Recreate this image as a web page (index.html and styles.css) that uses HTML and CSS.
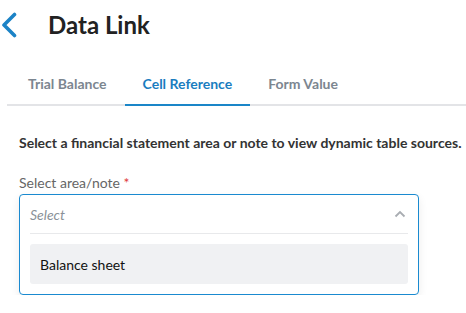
FILE: index.html
```html
<!DOCTYPE html>
<html lang="en">
<head>
    <meta charset="UTF-8">
    <meta name="viewport" content="width=device-width, initial-scale=1.0">
    <title>Data Link</title>
    <link rel="stylesheet" href="styles.css">
</head>
<body>

    <div class="header">
        <!-- Back arrow -->
        <svg class="back-icon" width="16" height="26" viewBox="0 0 16 26">
            <path d="M13.5 2.5 L3 13 L13.5 23.5" fill="none" stroke="#1c83c6" stroke-width="3.6" stroke-linecap="round" stroke-linejoin="round"/>
        </svg>
        <div class="title">Data Link</div>
    </div>

    <div class="tabs">
        <div class="tab">Trial Balance</div>
        <div class="tab active">Cell Reference</div>
        <div class="tab">Form Value</div>
    </div>

    <div class="content">
        <div class="intro">Select a financial statement area or note to view dynamic table sources.</div>

        <div class="field-label">Select area/note <span class="required">*</span></div>

        <div class="select-box">
            <div class="select-head">
                <span class="placeholder">Select</span>
                <svg width="12" height="8" viewBox="0 0 12 8">
                    <path d="M1.5 6.5 L6 2 L10.5 6.5" fill="none" stroke="#a9adb2" stroke-width="1.8"/>
                </svg>
            </div>
            <div class="option">Balance sheet</div>
        </div>
    </div>

</body>
</html>
```

FILE: styles.css
```css
* {
    margin: 0;
    padding: 0;
    box-sizing: border-box;
    font-family: Lato, "Liberation Sans", sans-serif;
}

body {
    background: #fff;
    color: #222;
}

.header {
    display: flex;
    align-items: center;
    height: 50px;
    padding-left: 1px;
}

.title {
    font-size: 24px;
    font-weight: bold;
    color: #222;
    margin-left: 31px;
    margin-top: -1px;
}

.tabs {
    display: flex;
    margin-left: 7px;
    margin-top: 15px;
    border-bottom: 2px solid #e3e4e7;
    padding-left: 4px;
}

.tab {
    font-size: 14px;
    font-weight: bold;
    color: #7c8690;
    padding: 10px 18px 12px;
    margin-bottom: -2px;
    border-bottom: 2px solid transparent;
}

.tab:first-child {
    padding-left: 17px;
}

.tab.active {
    color: #1a7dbf;
    border-bottom-color: #1a86c8;
}

.content {
    padding: 0 19px;
}

.intro {
    font-size: 14px;
    font-weight: bold;
    color: #333;
    margin-top: 28px;
    white-space: nowrap;
}

.field-label {
    font-size: 14px;
    color: #666;
    margin-top: 23px;
}

.required {
    color: #e03a3a;
}

.select-box {
    width: 400px;
    margin-top: 3px;
    border: 1px solid #1a8ad0;
    border-radius: 4px;
    padding: 0 10px 10px;
    box-shadow: 0px 4px 10px rgba(0, 0, 0, 0.08);
}

.select-head {
    display: flex;
    justify-content: space-between;
    align-items: center;
    height: 39px;
    border-bottom: 1px solid #e8e9eb;
    margin-bottom: 10px;
    padding-right: 2px;
}

.placeholder {
    font-size: 14px;
    font-style: italic;
    color: #8a9198;
}

.option {
    background: #f0f1f3;
    border-radius: 3px;
    height: 40px;
    display: flex;
    align-items: center;
    padding-left: 10px;
    font-size: 14px;
    color: #111;
}
```
